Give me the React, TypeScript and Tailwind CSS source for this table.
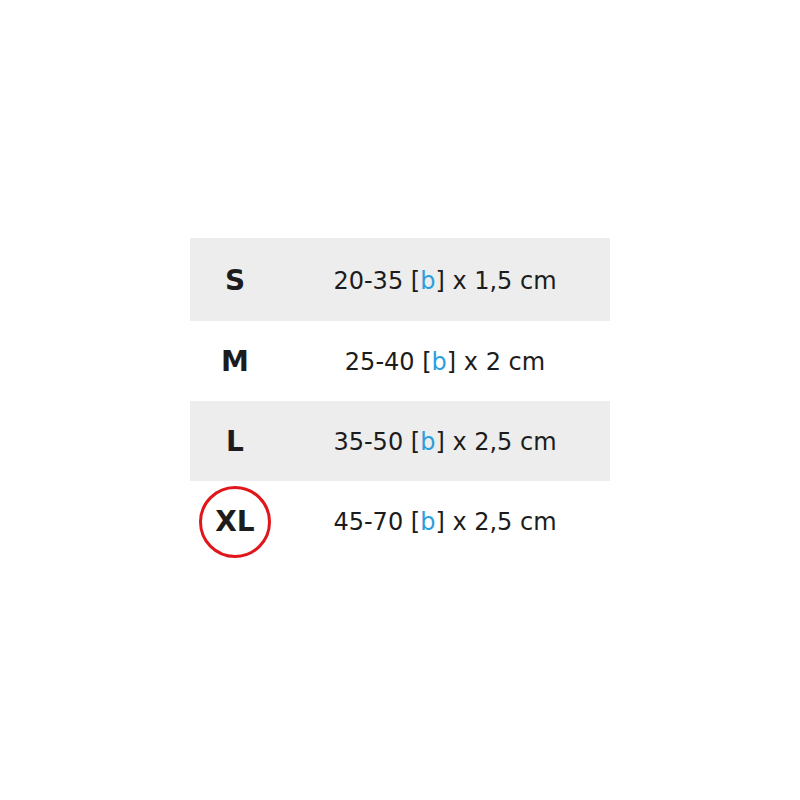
const ROWS = [
  { size: "S", range: "20-35", width: "1,5" },
  { size: "M", range: "25-40", width: "2" },
  { size: "L", range: "35-50", width: "2,5" },
  { size: "XL", range: "45-70", width: "2,5", marked: true },
];

export default function App() {
  return (
    <div className="flex h-[800px] w-[800px] items-start justify-center bg-white pt-[238px] font-['DejaVu_Sans',sans-serif] text-[#1c1c1c]">
      <div className="flex w-[420px] flex-col">
        {ROWS.map((row, i) => (
          <div
            key={row.size}
            className={`flex items-center ${i === 0 ? "h-[83px] pt-[3px]" : "h-[80px] pt-[2px]"} ${i % 2 === 0 ? "bg-[#ededed]" : "bg-white"}`}
          >
            <div className="flex w-[90px] items-center justify-center">
              {row.marked ? (
                <span className="flex h-[72px] w-[72px] items-center justify-center rounded-full border-[3px] border-[#e0161b] text-[28px] font-bold">
                  {row.size}
                </span>
              ) : (
                <span className="text-[28px] font-bold">{row.size}</span>
              )}
            </div>
            <div className="flex-1 text-center text-[24px]">
              {row.range} [<span className="text-[#2b9fdc]">b</span>] x {row.width} cm
            </div>
          </div>
        ))}
      </div>
    </div>
  );
}
